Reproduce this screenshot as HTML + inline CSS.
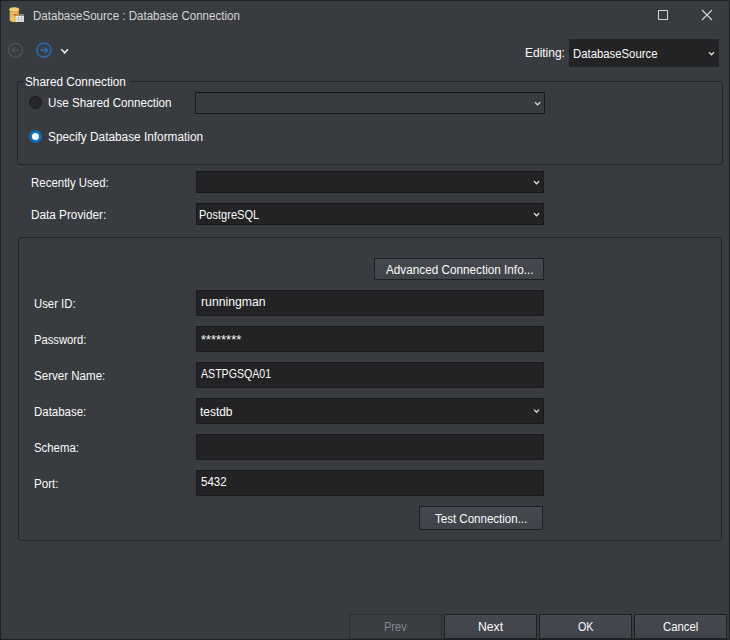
<!DOCTYPE html>
<html><head><meta charset="utf-8">
<style>
*{box-sizing:border-box;margin:0;padding:0}
html,body{width:730px;height:640px;overflow:hidden;background:#383b40}
body{font-family:"Liberation Sans",sans-serif;font-size:12px;color:#f1f1f1;position:relative}
.abs{position:absolute}
.win{position:absolute;left:0;top:0;width:730px;height:640px;border:1px solid #202123}
.t{position:absolute;white-space:nowrap;line-height:16px;height:16px}
.inp{position:absolute;background:#232325;border:1px solid #1a1a1c}
.dis{background:#383b40;border-color:#19191b}
.grp{position:absolute;border:1px solid #222326;border-radius:3px}
.btn{position:absolute;background:linear-gradient(#45484f,#404349);border:1px solid #1f2022}
.btn.off{background:#3a3d42;border-color:#2b2d30}
svg{position:absolute;overflow:visible}
</style></head><body>
<div class="win"></div>

<!-- title icon -->
<svg style="left:0;top:0" width="40" height="30">
 <defs><linearGradient id="cy" x1="0" x2="1" y1="0" y2="0"><stop offset="0" stop-color="#dcab4d"/><stop offset="0.25" stop-color="#ebc062"/><stop offset="0.75" stop-color="#ebc062"/><stop offset="1" stop-color="#e0b052"/></linearGradient></defs>
 <path d="M9.7 10V20.3C9.7 21.3 11.7 22.1 14.25 22.1S18.8 21.3 18.8 20.3V10Z" fill="url(#cy)"/>
 <path d="M9.4 9.9C9.4 10.9 11.6 11.7 14.25 11.7S19.1 10.9 19.1 9.9" fill="none" stroke="#9a752c" stroke-width="0.8"/>
 <ellipse cx="14.25" cy="9.5" rx="4.95" ry="2.15" fill="#f2c76b"/>
 <ellipse cx="14.25" cy="9.3" rx="3.6" ry="1.1" fill="none" stroke="#f8dc97" stroke-width="0.5"/>
 <rect x="16" y="15.6" width="7.9" height="6.3" fill="#f6f6f8"/>
 <rect x="17.9" y="14" width="6" height="1.8" fill="#8b8b8b"/>
 <rect x="13.7" y="14" width="4.2" height="1.7" fill="#e25a40"/>
 <rect x="16.3" y="14" width="1.6" height="1.7" fill="#e8853c"/>
 <path d="M18.45 15.8V21.9M21.45 15.8V21.9M16 17.9H23.9M16 19.85H23.9" stroke="#b2b4bc" stroke-width="0.75" fill="none"/>
 <path d="M20 14V15.7M22 14V15.7" stroke="#7a7a7a" stroke-width="0.4" fill="none"/>
</svg>

<!-- window buttons -->
<svg style="left:658px;top:10px" width="10" height="10"><rect x="0.5" y="0.5" width="9" height="9" fill="none" stroke="#d6d6d6" stroke-width="1"/></svg>
<svg style="left:702px;top:10px" width="10" height="10"><path d="M0 0L10 10M10 0L0 10" stroke="#d6d6d6" stroke-width="1.1" fill="none"/></svg>

<!-- nav -->
<svg style="left:0;top:0" width="80" height="70">
 <circle cx="15.5" cy="50.2" r="7" fill="none" stroke="#4d5054" stroke-width="1.6"/>
 <path d="M13.5 50.2H19.6" stroke="#4d5054" stroke-width="1.4" fill="none"/>
 <path d="M11 50.2L14.8 46.7V53.7Z" fill="#4d5054"/>
 <circle cx="44" cy="50.2" r="7" fill="none" stroke="#2c66a9" stroke-width="1.75"/>
 <path d="M40.2 50.2H46" stroke="#2c66a9" stroke-width="1.9" fill="none"/>
 <path d="M48.8 50.2L44.6 46.2V54.2Z" fill="#2c66a9"/>
 <path d="M61.3 49.3L64.65 52.8L68 49.3" fill="none" stroke="#f1f1f1" stroke-width="1.5"/>
</svg>

<!-- Editing combo -->
<div class="inp" style="left:569px;top:39px;width:150px;height:28px;border-color:#232325"></div>

<!-- group 1 -->
<div class="grp" style="left:17px;top:81px;width:706px;height:84px"></div>
<div class="abs" style="left:23px;top:80px;width:107px;height:3px;background:#383b40"></div>
<div class="abs" style="left:29px;top:96px;width:13px;height:13px;border-radius:50%;background:#262628;border:1px solid #1c1c1e"></div>
<div class="inp dis" style="left:195px;top:92px;width:350px;height:22px"></div>
<div class="abs" style="left:29px;top:130px;width:13px;height:13px;border-radius:50%;background:#fff;border:3px solid #0e6db8"></div>

<!-- recently used / provider -->
<div class="inp" style="left:196px;top:171px;width:348px;height:22px"></div>
<div class="inp" style="left:196px;top:203px;width:348px;height:22px"></div>

<!-- group 2 -->
<div class="grp" style="left:18px;top:237px;width:704px;height:304px"></div>
<div class="btn" style="left:374px;top:258px;width:170px;height:22px"></div>
<div class="inp" style="left:196px;top:290px;width:348px;height:26px"></div>
<div class="inp" style="left:196px;top:326px;width:348px;height:26px"></div>
<div class="inp" style="left:196px;top:362px;width:348px;height:26px"></div>
<div class="inp" style="left:196px;top:398px;width:348px;height:26px"></div>
<div class="inp" style="left:196px;top:434px;width:348px;height:26px"></div>
<div class="inp" style="left:196px;top:470px;width:348px;height:26px"></div>
<div class="btn" style="left:419px;top:506px;width:124px;height:24px"></div>

<!-- bottom buttons -->
<div class="btn off" style="left:349px;top:614px;width:93px;height:25px"></div>
<div class="btn" style="left:444px;top:614px;width:93px;height:25px"></div>
<div class="btn" style="left:539px;top:614px;width:93px;height:25px"></div>
<div class="btn" style="left:634px;top:614px;width:93px;height:25px"></div>

<svg style="left:0;top:0" width="730" height="640"><path d="M709.00 52.20L711.50 54.80L714.00 52.20 M535.10 102.30L537.60 104.90L540.10 102.30 M534.10 181.20L536.60 183.80L539.10 181.20 M534.10 213.20L536.60 215.80L539.10 213.20 M534.10 409.60L536.60 412.20L539.10 409.60" fill="none" stroke="#dedede" stroke-width="1.3"/></svg>
<div class="t" id="title" style="left:32.98px;top:8.00px;transform-origin:0 0;transform:scaleX(0.9629);color:#d6d6d6">DatabaseSource : Database Connection</div>
<div class="t" id="editing" style="left:524.56px;top:45.00px;transform-origin:0 0;transform:scaleX(0.9967);color:#fcfcfc">Editing:</div>
<div class="t" id="dbs" style="left:572.57px;top:46.00px;transform-origin:0 0;transform:scaleX(0.9448);color:#fcfcfc">DatabaseSource</div>
<div class="t" id="leg" style="left:24.87px;top:74.00px;transform-origin:0 0;transform:scaleX(0.9820);color:#fcfcfc">Shared Connection</div>
<div class="t" id="r1" style="left:47.86px;top:95.00px;transform-origin:0 0;transform:scaleX(0.9689);color:#fcfcfc">Use Shared Connection</div>
<div class="t" id="r2" style="left:47.57px;top:129.00px;transform-origin:0 0;transform:scaleX(0.9850);color:#fcfcfc">Specify Database Information</div>
<div class="t" id="ru" style="left:30.87px;top:175.00px;transform-origin:0 0;transform:scaleX(0.9556);color:#fcfcfc">Recently Used:</div>
<div class="t" id="dp" style="left:30.59px;top:207.00px;transform-origin:0 0;transform:scaleX(0.9801);color:#fcfcfc">Data Provider:</div>
<div class="t" id="pg" style="left:199.32px;top:207.00px;transform-origin:0 0;transform:scaleX(0.9196);color:#fcfcfc">PostgreSQL</div>
<div class="t" id="adv" style="left:385.90px;top:262.00px;transform-origin:0 0;transform:scaleX(0.9779);color:#fcfcfc">Advanced Connection Info...</div>
<div class="t" id="l1" style="left:34.11px;top:296.00px;transform-origin:0 0;transform:scaleX(0.9457);color:#fcfcfc">User ID:</div>
<div class="t" id="v1" style="left:201.16px;top:294.00px;transform-origin:0 0;transform:scaleX(1.0193);color:#fcfcfc">runningman</div>
<div class="t" id="l2" style="left:34.36px;top:332.00px;transform-origin:0 0;transform:scaleX(0.9361);color:#fcfcfc">Password:</div>
<div class="t" id="v2" style="left:200.62px;top:332.00px;transform-origin:0 0;transform:scaleX(1.0753);color:#fcfcfc">********</div>
<div class="t" id="l3" style="left:33.74px;top:368.00px;transform-origin:0 0;transform:scaleX(0.9633);color:#fcfcfc">Server Name:</div>
<div class="t" id="v3" style="left:200.74px;top:366.00px;transform-origin:0 0;transform:scaleX(0.8827);color:#fcfcfc">ASTPGSQA01</div>
<div class="t" id="l4" style="left:33.82px;top:404.00px;transform-origin:0 0;transform:scaleX(0.9539);color:#fcfcfc">Database:</div>
<div class="t" id="v4" style="left:199.54px;top:404.00px;transform-origin:0 0;transform:scaleX(0.9936);color:#fcfcfc">testdb</div>
<div class="t" id="l5" style="left:33.69px;top:440.00px;transform-origin:0 0;transform:scaleX(0.9484);color:#fcfcfc">Schema:</div>
<div class="t" id="l6" style="left:33.62px;top:476.00px;transform-origin:0 0;transform:scaleX(0.9695);color:#fcfcfc">Port:</div>
<div class="t" id="v6" style="left:201.11px;top:474.00px;transform-origin:0 0;transform:scaleX(0.9612);color:#fcfcfc">5432</div>
<div class="t" id="tc" style="left:435.37px;top:511.00px;transform-origin:0 0;transform:scaleX(0.9606);color:#fcfcfc">Test Connection...</div>
<div class="t" id="b1" style="left:383.71px;top:619.00px;transform-origin:0 0;transform:scaleX(0.9182);color:#85888e">Prev</div>
<div class="t" id="b2" style="left:478.33px;top:619.00px;transform-origin:0 0;transform:scaleX(1.0163);color:#fcfcfc">Next</div>
<div class="t" id="b3" style="left:577.58px;top:619.00px;transform-origin:0 0;transform:scaleX(0.8968);color:#fcfcfc">OK</div>
<div class="t" id="b4" style="left:662.80px;top:619.00px;transform-origin:0 0;transform:scaleX(0.9422);color:#fcfcfc">Cancel</div>
</body></html>
